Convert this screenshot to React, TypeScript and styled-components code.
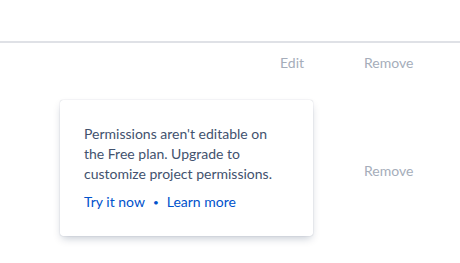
import React from 'react';
import styled, { createGlobalStyle } from 'styled-components';

const GlobalStyle = createGlobalStyle`
  html, body {
    margin: 0;
    padding: 0;
    background: #ffffff;
  }
  body {
    font-family: Lato, "Noto Sans", "Liberation Sans", sans-serif;
    font-size: 14px;
    color: #172b4d;
  }
`;

const Page = styled.div`
  position: relative;
  width: 460px;
  height: 263px;
  overflow: hidden;
`;

const Header = styled.div`
  height: 41px;
  border-bottom: 2px solid #dfe1e6;
`;

const Row = styled.div<{ $height: number }>`
  display: grid;
  grid-template-columns: 1fr 84px 96px;
  align-items: center;
  height: ${p => p.$height}px;
  line-height: 20px;
`;

const Action = styled.span`
  color: #a5adba;
  font-size: 14px;
`;

const Popup = styled.div`
  position: absolute;
  left: 60px;
  top: 100px;
  width: 253px;
  box-sizing: border-box;
  padding: 24px;
  background: #ffffff;
  border-radius: 3px;
  box-shadow: 0 4px 8px -2px rgba(9, 30, 66, 0.25), 0 0 1px rgba(9, 30, 66, 0.31);
  font-size: 14px;
  line-height: 20px;
  color: #42526e;
`;

const Message = styled.p`
  margin: 0;
`;

const Links = styled.div`
  display: flex;
  align-items: center;
  gap: 8px;
  margin-top: 8px;
`;

const Link = styled.a`
  color: #0052cc;
  text-decoration: none;
  cursor: pointer;
`;

const Dot = styled.span`
  color: #0052cc;
  font-size: 10px;
`;

export default function App() {
  return (
    <>
      <GlobalStyle />
      <Page>
        <Header />
        <Row $height={40}>
          <span />
          <Action>Edit</Action>
          <Action>Remove</Action>
        </Row>
        <Row $height={176}>
          <span />
          <span />
          <Action>Remove</Action>
        </Row>
        <Popup>
          <Message>
            Permissions aren't editable on
            <br />
            the Free plan. Upgrade to
            <br />
            customize project permissions.
          </Message>
          <Links>
            <Link>Try it now</Link>
            <Dot>•</Dot>
            <Link>Learn more</Link>
          </Links>
        </Popup>
      </Page>
    </>
  );
}
